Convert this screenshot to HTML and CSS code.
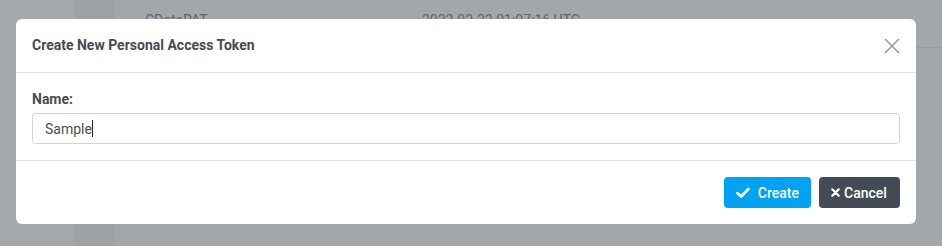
FILE: index.html
```html
<!DOCTYPE html>
<html>
<head>
<meta charset="utf-8">
<link rel="stylesheet" href="styles.css">
</head>
<body>
<div class="page">
  <aside class="sidebar"></aside>
  <div class="strip"></div>
  <main class="content">
    <div class="row">
      <span class="cell name">CDataPAT</span>
      <span class="cell date">2022-02-22 01:07:16 UTC</span>
    </div>
  </main>
</div>
<div class="modal">
  <header class="modal-header">
    <h5 class="modal-title">Create New Personal Access Token</h5>
    <button class="close" aria-label="Close">
      <svg width="16" height="16" viewBox="0 0 16 16"><path d="M1 1L15 15M15 1L1 15" stroke="#9a9c9e" stroke-width="1.6" fill="none"/></svg>
    </button>
  </header>
  <section class="modal-body">
    <label class="label">Name:</label>
    <div class="input"><span class="value">Sample</span><span class="caret"></span></div>
  </section>
  <footer class="modal-footer">
    <button class="btn btn-create">
      <svg width="14" height="12" viewBox="0 0 14 12"><path d="M1.5 6.2L5.2 9.6L12.5 2" stroke="#fff" stroke-width="2.8" fill="none" stroke-linecap="round" stroke-linejoin="round"/></svg>
      <span>Create</span>
    </button>
    <button class="btn btn-cancel">
      <svg width="9" height="9" viewBox="0 0 9 9"><path d="M1.3 1.3L7.7 7.7M7.7 1.3L1.3 7.7" stroke="#fff" stroke-width="2.2" fill="none" stroke-linecap="round"/></svg>
      <span>Cancel</span>
    </button>
  </footer>
</div>
</body>
</html>
```
FILE: styles.css
```css
html, body {
  margin: 0;
  padding: 0;
  height: 246px;
  overflow: hidden;
  font-family: Roboto, "Liberation Sans", sans-serif;
}
.page {
  display: flex;
  height: 246px;
  background: #a4a7aa;
}
.sidebar {
  width: 75px;
  background: #a5a8aa;
}
.strip {
  width: 40px;
  background: #9ea2a6;
}
.content {
  flex: 1;
}
.row {
  display: grid;
  grid-template-columns: 277px 1fr;
  padding: 10px 0 16px 30px;
  line-height: 21px;
  font-size: 14px;
  border-bottom: 1px solid #979a9d;
}
.name { color: #55687c; }
.date { color: #62666a; }

.modal {
  position: absolute;
  top: 19px;
  left: 16px;
  width: 900px;
  background: #fff;
  border-radius: 6px;
  color: #495057;
}
.modal-header {
  display: flex;
  align-items: center;
  justify-content: space-between;
  padding: 16px;
  border-bottom: 1px solid #dee2e6;
}
.modal-title {
  margin: 0;
  font-size: 14px;
  font-weight: 700;
  line-height: 21px;
  color: #464b50;
}
.close {
  border: 0;
  background: none;
  padding: 0;
  display: flex;
  width: 16px;
  height: 16px;
}
.modal-body {
  padding: 16px;
  display: flex;
  flex-direction: column;
  border-bottom: 1px solid #dee2e6;
}
.label {
  font-size: 14px;
  font-weight: 700;
  line-height: 21px;
  margin-bottom: 3px;
  color: #464b50;
}
.input {
  height: 29px;
  border: 1px solid #ced4da;
  border-radius: 4px;
  display: flex;
  align-items: center;
  padding: 0 12px;
  font-size: 14px;
  color: #495057;
}
.caret {
  width: 1px;
  height: 17px;
  background: #222;
}
.modal-footer {
  display: flex;
  justify-content: flex-end;
  gap: 8px;
  padding: 16px;
}
.btn {
  display: flex;
  align-items: center;
  height: 31px;
  border: 0;
  border-radius: 4px;
  color: #fff;
  font-family: Roboto, "Liberation Sans", sans-serif;
  font-size: 14px;
  font-weight: 500;
  padding: 0 12px;
}
.btn-create {
  background: #00a2f2;
  width: 87px;
  gap: 8px;
}
.btn-cancel {
  background: #434c56;
  width: 81px;
  gap: 4px;
}
```
